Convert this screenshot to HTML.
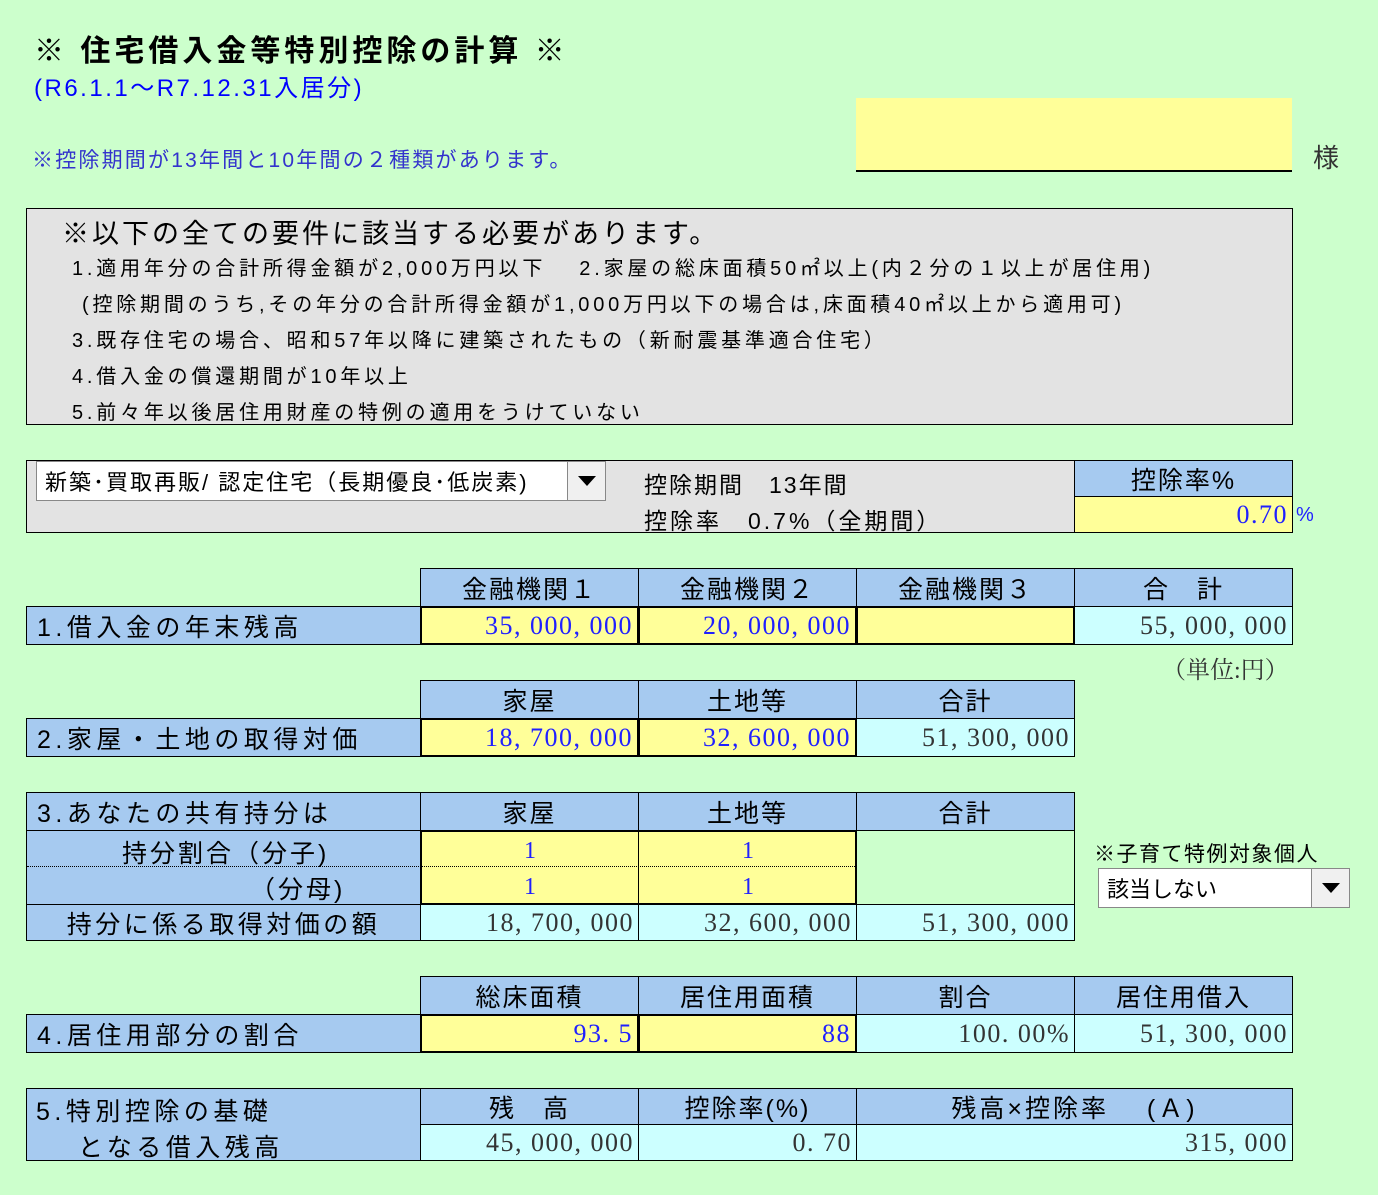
<!DOCTYPE html>
<html><head><meta charset="utf-8">
<style>
*{margin:0;padding:0;box-sizing:border-box}
body{width:1378px;height:1195px;background:#ccffcc;position:relative;overflow:hidden;font-family:"Liberation Sans","Noto Sans CJK JP",sans-serif;color:#000}
.a{position:absolute;white-space:nowrap}
.c{position:absolute;border:1px solid #000;display:flex;align-items:center;justify-content:center;font-size:25px;white-space:nowrap;letter-spacing:2px}
.b{background:#a6caf0}
.y{background:#ffff99}
.k{background:#ccffff}
.n{justify-content:flex-end;padding-right:4px;font-family:"Liberation Serif","Noto Serif CJK JP",serif;font-size:26px;letter-spacing:1.5px;color:#333}
.y.n{color:#2020ff}
.l{justify-content:flex-start;padding-left:10px;letter-spacing:4.5px}
.dd{position:absolute;background:#fff;border:1px solid #888;font-size:22px;display:flex;align-items:center;padding-left:8px}
.dd .ar{position:absolute;right:0;top:0;bottom:0;width:38px;background:#f0f0f0;border-left:1px solid #888;display:flex;align-items:center;justify-content:center}
.ar:after{content:"";border-left:9px solid transparent;border-right:9px solid transparent;border-top:10px solid #000}
.r{font-size:20px;letter-spacing:3.8px}
</style></head><body>
<div class="a" style="left:34px;top:26px;font-size:30px;font-weight:bold;letter-spacing:4px">※ 住宅借入金等特別控除の計算 ※</div>
<div class="a" style="left:34px;top:68px;font-size:24px;color:#0000ff;letter-spacing:2.5px">(R6.1.1～R7.12.31入居分)</div>
<div class="a" style="left:32px;top:144px;font-size:21px;color:#3333cc;letter-spacing:2.2px">※控除期間が13年間と10年間の２種類があります。</div>
<div class="a" style="left:856px;top:98px;width:436px;height:74px;background:#ffff99;border-bottom:2px solid #000"></div>
<div class="a" style="left:1313px;top:138px;font-size:26px;color:#333">様</div>

<div class="a" style="left:26px;top:208px;width:1267px;height:217px;background:#e3e3e3;border:1px solid #000"></div>
<div class="a" style="left:62px;top:212px;font-size:27px;letter-spacing:3px">※以下の全ての要件に該当する必要があります。</div>
<div class="a r" style="left:72px;top:252px">1.適用年分の合計所得金額が2,000万円以下　 2.家屋の総床面積50㎡以上(内２分の１以上が居住用)</div>
<div class="a r" style="left:82px;top:288px">(控除期間のうち,その年分の合計所得金額が1,000万円以下の場合は,床面積40㎡以上から適用可)</div>
<div class="a r" style="left:72px;top:324px">3.既存住宅の場合、昭和57年以降に建築されたもの（新耐震基準適合住宅）</div>
<div class="a r" style="left:72px;top:360px">4.借入金の償還期間が10年以上</div>
<div class="a r" style="left:72px;top:396px">5.前々年以後居住用財産の特例の適用をうけていない</div>

<div class="a" style="left:26px;top:460px;width:1049px;height:73px;background:#e3e3e3;border:1px solid #000"></div>
<div class="dd" style="left:36px;top:461px;width:570px;height:40px;letter-spacing:2px">新築･買取再販/ 認定住宅（長期優良･低炭素)<div class="ar"></div></div>
<div class="a" style="left:644px;top:466px;font-size:23px;letter-spacing:2px">控除期間　13年間</div>
<div class="a" style="left:644px;top:502px;font-size:23px;letter-spacing:3px">控除率　0.7%（全期間）</div>
<div class="c b" style="left:1074px;top:460px;width:219px;height:37px">控除率%</div>
<div class="c y n" style="left:1074px;top:496px;width:219px;height:37px">0.70</div>
<div class="a" style="left:1296px;top:504px;font-size:20px;color:#2020ff">%</div>

<div class="c b" style="left:420px;top:568px;width:219px;height:39px">金融機関１</div>
<div class="c b" style="left:638px;top:568px;width:219px;height:39px">金融機関２</div>
<div class="c b" style="left:856px;top:568px;width:219px;height:39px">金融機関３</div>
<div class="c b" style="left:1074px;top:568px;width:219px;height:39px">合　計</div>
<div class="c b l" style="left:26px;top:606px;width:395px;height:39px">1.借入金の年末残高</div>
<div class="c y n" style="left:420px;top:606px;width:219px;height:39px;border-width:2px">35, 000, 000</div>
<div class="c y n" style="left:638px;top:606px;width:219px;height:39px;border-width:2px">20, 000, 000</div>
<div class="c y n" style="left:856px;top:606px;width:219px;height:39px;border-width:2px"></div>
<div class="c k n" style="left:1074px;top:606px;width:219px;height:39px">55, 000, 000</div>
<div class="a" style="left:1162px;top:650px;font-size:24px;color:#333;font-family:'Liberation Serif','Noto Serif CJK JP',serif">（単位:円）</div>

<div class="c b" style="left:420px;top:680px;width:219px;height:39px">家屋</div>
<div class="c b" style="left:638px;top:680px;width:219px;height:39px">土地等</div>
<div class="c b" style="left:856px;top:680px;width:219px;height:39px">合計</div>
<div class="c b l" style="left:26px;top:718px;width:395px;height:39px">2.家屋・土地の取得対価</div>
<div class="c y n" style="left:420px;top:718px;width:219px;height:39px;border-width:2px">18, 700, 000</div>
<div class="c y n" style="left:638px;top:718px;width:219px;height:39px;border-width:2px">32, 600, 000</div>
<div class="c k n" style="left:856px;top:718px;width:219px;height:39px">51, 300, 000</div>

<div class="c b l" style="left:26px;top:792px;width:395px;height:39px">3.あなたの共有持分は</div>
<div class="c b" style="left:420px;top:792px;width:219px;height:39px">家屋</div>
<div class="c b" style="left:638px;top:792px;width:219px;height:39px">土地等</div>
<div class="c b" style="left:856px;top:792px;width:219px;height:39px">合計</div>
<div class="a b" style="left:26px;top:830px;width:395px;height:75px;border:1px solid #000"></div>
<div class="a" style="left:27px;top:866px;width:828px;border-top:1px dotted #000"></div>
<div class="a" style="left:122px;top:834px;font-size:25px;letter-spacing:3px">持分割合（分子)</div>
<div class="a" style="left:250px;top:870px;font-size:25px;letter-spacing:3px">（分母)</div>
<div class="a y" style="left:420px;top:830px;width:437px;height:75px;border:2px solid #000"></div>
<div class="a" style="left:638px;top:831px;height:73px;border-left:1px solid #000"></div>
<div class="a" style="left:420px;top:866px;width:437px;border-top:1px dotted #000"></div>
<div class="a" style="left:524px;top:838px;font-size:24px;color:#2020ff;font-family:'Liberation Serif',serif">1</div>
<div class="a" style="left:742px;top:838px;font-size:24px;color:#2020ff;font-family:'Liberation Serif',serif">1</div>
<div class="a" style="left:524px;top:874px;font-size:24px;color:#2020ff;font-family:'Liberation Serif',serif">1</div>
<div class="a" style="left:742px;top:874px;font-size:24px;color:#2020ff;font-family:'Liberation Serif',serif">1</div>
<div class="a" style="left:856px;top:830px;width:219px;height:75px;border:1px solid #000;border-bottom:none"></div>
<div class="c b" style="left:26px;top:904px;width:395px;height:37px;letter-spacing:3.5px">持分に係る取得対価の額</div>
<div class="c k n" style="left:420px;top:904px;width:219px;height:37px">18, 700, 000</div>
<div class="c k n" style="left:638px;top:904px;width:219px;height:37px">32, 600, 000</div>
<div class="c k n" style="left:856px;top:904px;width:219px;height:37px">51, 300, 000</div>
<div class="a" style="left:1094px;top:838px;font-size:21px;letter-spacing:1.5px">※子育て特例対象個人</div>
<div class="dd" style="left:1098px;top:868px;width:252px;height:40px">該当しない<div class="ar"></div></div>

<div class="c b" style="left:420px;top:976px;width:219px;height:39px">総床面積</div>
<div class="c b" style="left:638px;top:976px;width:219px;height:39px">居住用面積</div>
<div class="c b" style="left:856px;top:976px;width:219px;height:39px">割合</div>
<div class="c b" style="left:1074px;top:976px;width:219px;height:39px">居住用借入</div>
<div class="c b l" style="left:26px;top:1014px;width:395px;height:39px">4.居住用部分の割合</div>
<div class="c y n" style="left:420px;top:1014px;width:219px;height:39px;border-width:2px">93. 5</div>
<div class="c y n" style="left:638px;top:1014px;width:219px;height:39px;border-width:2px">88</div>
<div class="c k n" style="left:856px;top:1014px;width:219px;height:39px">100. 00%</div>
<div class="c k n" style="left:1074px;top:1014px;width:219px;height:39px">51, 300, 000</div>

<div class="a b" style="left:26px;top:1088px;width:395px;height:73px;border:1px solid #000"></div>
<div class="a" style="left:36px;top:1092px;font-size:25px;letter-spacing:4.5px">5.特別控除の基礎</div>
<div class="a" style="left:78px;top:1128px;font-size:25px;letter-spacing:4.5px">となる借入残高</div>
<div class="c b" style="left:420px;top:1088px;width:219px;height:37px">残　高</div>
<div class="c b" style="left:638px;top:1088px;width:219px;height:37px">控除率(%)</div>
<div class="c b" style="left:856px;top:1088px;width:437px;height:37px;letter-spacing:3px">残高×控除率　 (Ａ)</div>
<div class="c k n" style="left:420px;top:1124px;width:219px;height:37px">45, 000, 000</div>
<div class="c k n" style="left:638px;top:1124px;width:219px;height:37px">0. 70</div>
<div class="c k n" style="left:856px;top:1124px;width:437px;height:37px">315, 000</div>
</body></html>
